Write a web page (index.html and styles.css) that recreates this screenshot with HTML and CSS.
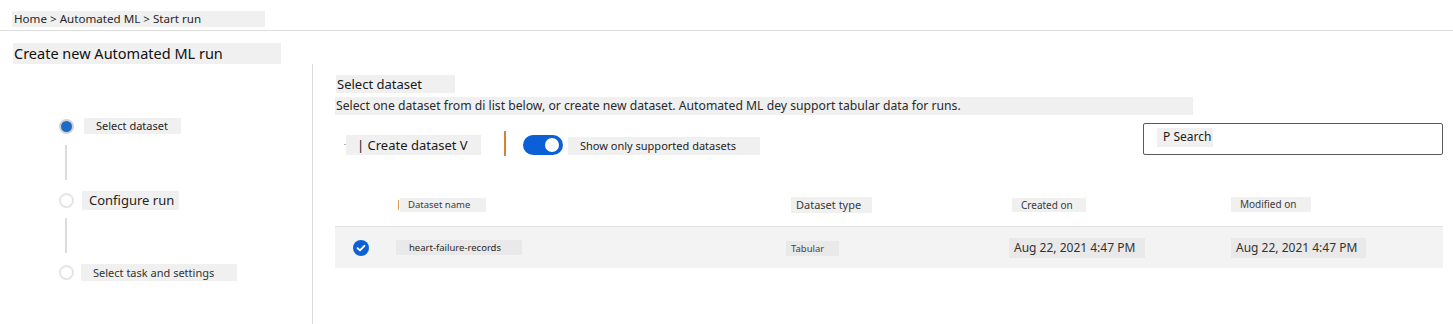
FILE: index.html
```html
<!DOCTYPE html>
<html lang="en">
<head>
<meta charset="utf-8">
<title>Create new Automated ML run</title>
<link rel="stylesheet" href="styles.css">
</head>
<body>
<div class="topbar"><span class="crumb">Home &gt; Automated ML &gt; Start run</span></div>
<div class="title-row"><span class="page-title">Create new Automated ML run</span></div>
<div class="main">
  <aside class="sidebar">
    <div class="step">
      <span class="dot dot-active"></span>
      <span class="step-label l1">Select dataset</span>
    </div>
    <div class="connector c1"></div>
    <div class="step">
      <span class="dot"></span>
      <span class="step-label l2">Configure run</span>
    </div>
    <div class="connector c2"></div>
    <div class="step">
      <span class="dot"></span>
      <span class="step-label l3">Select task and settings</span>
    </div>
  </aside>
  <section class="content">
    <div class="sec-title">Select dataset</div>
    <div class="desc">Select one dataset from di list below, or create new dataset. Automated ML dey support tabular data for runs.</div>
    <div class="toolbar">
      <span class="tick"></span>
      <span class="create">| Create dataset V</span>
      <span class="sep"></span>
      <span class="toggle"><span class="knob"></span></span>
      <span class="toggle-label">Show only supported datasets</span>
      <div class="search"><span class="search-text">P Search</span></div>
    </div>
    <div class="thead">
      <div class="cell c-check"></div>
      <div class="cell c-name"><span class="bar"></span><span class="h h-name">Dataset name</span></div>
      <div class="cell c-type"><span class="h h-type">Dataset type</span></div>
      <div class="cell c-created"><span class="h h-created">Created on</span></div>
      <div class="cell c-mod"><span class="h h-mod">Modified on</span></div>
    </div>
    <div class="trow">
      <div class="cell c-check">
        <svg class="check" width="16" height="16" viewBox="0 0 16 16"><circle cx="8" cy="8" r="8" fill="#0b62d6"/><path d="M4.6 8.2 L7 10.4 L11.4 5.8" fill="none" stroke="#fff" stroke-width="1.9" stroke-linecap="round" stroke-linejoin="round"/></svg>
      </div>
      <div class="cell c-name"><span class="v v-name">heart-failure-records</span></div>
      <div class="cell c-type"><span class="v v-type">Tabular</span></div>
      <div class="cell c-created"><span class="v v-date">Aug 22, 2021 4:47 PM</span></div>
      <div class="cell c-mod"><span class="v v-date">Aug 22, 2021 4:47 PM</span></div>
    </div>
  </section>
</div>
</body>
</html>
```
FILE: styles.css
```css
* { box-sizing: border-box; }
html, body { margin: 0; padding: 0; background: #fff; }
body {
  font-family: "Noto Sans", "Open Sans", "DejaVu Sans", sans-serif;
  color: #1f1f1f;
  width: 1453px;
  height: 324px;
  overflow: hidden;
}
.topbar {
  height: 31px;
  border-bottom: 1px solid #dcdcdc;
  padding: 6px 0 0 12px;
}
.crumb {
  display: inline-block;
  width: 253px;
  height: 16px;
  line-height: 16px;
  font-size: 11.6px;
  padding-left: 2px;
  background: #f0f0f0;
  color: #262626;
}
.title-row { padding: 11px 0 0 13px; height: 33px; }
.page-title {
  display: inline-block;
  width: 268px;
  height: 21px;
  line-height: 21px;
  font-size: 14.5px;
  padding-left: 1px;
  background: #f0f0f0;
  color: #111;
}
.main { display: flex; height: 260px; }
.sidebar {
  width: 313px;
  border-right: 1px solid #d9d9d9;
  padding: 52px 0 0 59px;
  display: flex;
  flex-direction: column;
}
.step { display: flex; align-items: center; height: 20px; }
.dot {
  width: 15px; height: 15px; border-radius: 50%;
  border: 2px solid #e4e4e4; background: #fff; flex: none;
}
.dot-active { background: #1a6cc4; border-color: #d2d0d4; }
.step-label {
  display: inline-block;
  background: #f0f0f0;
  color: #1f1f1f;
}
.l1 { margin-left: 10px; width: 97px; height: 16px; line-height: 16px; font-size: 11px; padding-left: 12px; }
.l2 { margin-left: 8px; width: 97px; height: 19px; line-height: 19px; font-size: 13px; padding-left: 7px; }
.l3 { margin-left: 7px; width: 156px; height: 17px; line-height: 17px; font-size: 11px; padding-left: 12px; color: #333; }
.connector { width: 2px; background: #dcdcdc; margin-left: 6px; height: 35px; }
.c1 { margin-top: 9px; margin-bottom: 10px; }
.c2 { margin-top: 8px; margin-bottom: 9px; }

.content { flex: 1; padding: 11px 10px 0 22px; }
.sec-title {
  width: 119px; height: 18px; line-height: 18px; font-size: 13px;
  padding-left: 1px; margin-left: 1px; background: #f0f0f0; color: #1a1a1a;
}
.desc {
  margin-top: 4px; width: 858px; height: 18px; line-height: 18px;
  font-size: 12.2px; padding-left: 1px; background: #f0f0f0; color: #2a2a2a;
  white-space: nowrap;
}
.toolbar { display: flex; align-items: flex-end; height: 32px; margin-top: 8px; }
.tick { width: 2px; height: 1px; background: #b9a7d6; margin: 0 0 10px 9px; }
.create {
  width: 135px; height: 20px; line-height: 20px; font-size: 13px;
  padding-left: 11px; background: #f0f0f0; color: #1a1a1a;
}
.sep { width: 2px; height: 25px; background: #d9822b; margin-left: 23px; margin-bottom: -1px; }
.toggle {
  width: 40px; height: 20px; border-radius: 10px; background: #0b5fd7;
  margin-left: 17px; display: flex; align-items: center; justify-content: flex-end; padding-right: 4px;
}
.knob { width: 14px; height: 14px; border-radius: 50%; background: #fff; }
.toggle-label {
  margin-left: 5px; width: 192px; height: 18px; line-height: 18px; font-size: 11px;
  padding-left: 12px; background: #f0f0f0; color: #1f1f1f;
}
.search {
  margin-left: auto; width: 300px; height: 32px; border: 1px solid #5a5a5a;
  border-radius: 2px; padding: 4px 0 0 13px;
}
.search-text {
  display: block; width: 56px; height: 19px; line-height: 18px; font-size: 12px;
  padding-left: 6px; background: #f0f0f0; color: #1a1a1a;
}

.thead, .trow {
  display: grid;
  grid-template-columns: 61px 390px 223px 222px 1fr;
}
.thead { margin-top: 42px; height: 29px; }
.cell { display: flex; align-items: flex-start; }
.bar { width: 1px; height: 10px; background: #e39a4a; margin: 3px 1px 0 2px; }
.h { display: inline-block; background: #f0f0f0; color: #3a3a3a; }
.h-name { width: 86px; height: 14px; line-height: 14px; font-size: 9.5px; padding-left: 8px; margin-top: 1px; }
.h-type { margin-left: 5px; width: 81px; height: 16px; line-height: 16px; font-size: 11px; padding-left: 5px; }
.h-created { margin-left: 3px; width: 74px; height: 14px; line-height: 14px; font-size: 10px; padding-left: 9px; margin-top: 1px; }
.h-mod { width: 80px; height: 15px; line-height: 15px; font-size: 10px; padding-left: 9px; }

.trow {
  height: 42px; background: #f3f3f3; border-top: 1px solid #e3e3e3;
}
.trow .cell { align-items: center; }
.c-check { padding-left: 18px; }
.trow .c-check { padding-top: 1px; }
.v { display: inline-block; background: #e9e9e9; color: #333; }
.v-name { width: 126px; height: 15px; line-height: 15px; font-size: 9.5px; padding-left: 13px; color: #2a2a2a; }
.v-type { width: 53px; height: 15px; line-height: 15px; font-size: 9.5px; padding-left: 5px; margin-top: 2px; color: #444; }
.v-date { width: 136px; height: 20px; line-height: 20px; font-size: 12px; padding-left: 5px; color: #333; }
.c-mod .v-date { width: 135px; }
```
